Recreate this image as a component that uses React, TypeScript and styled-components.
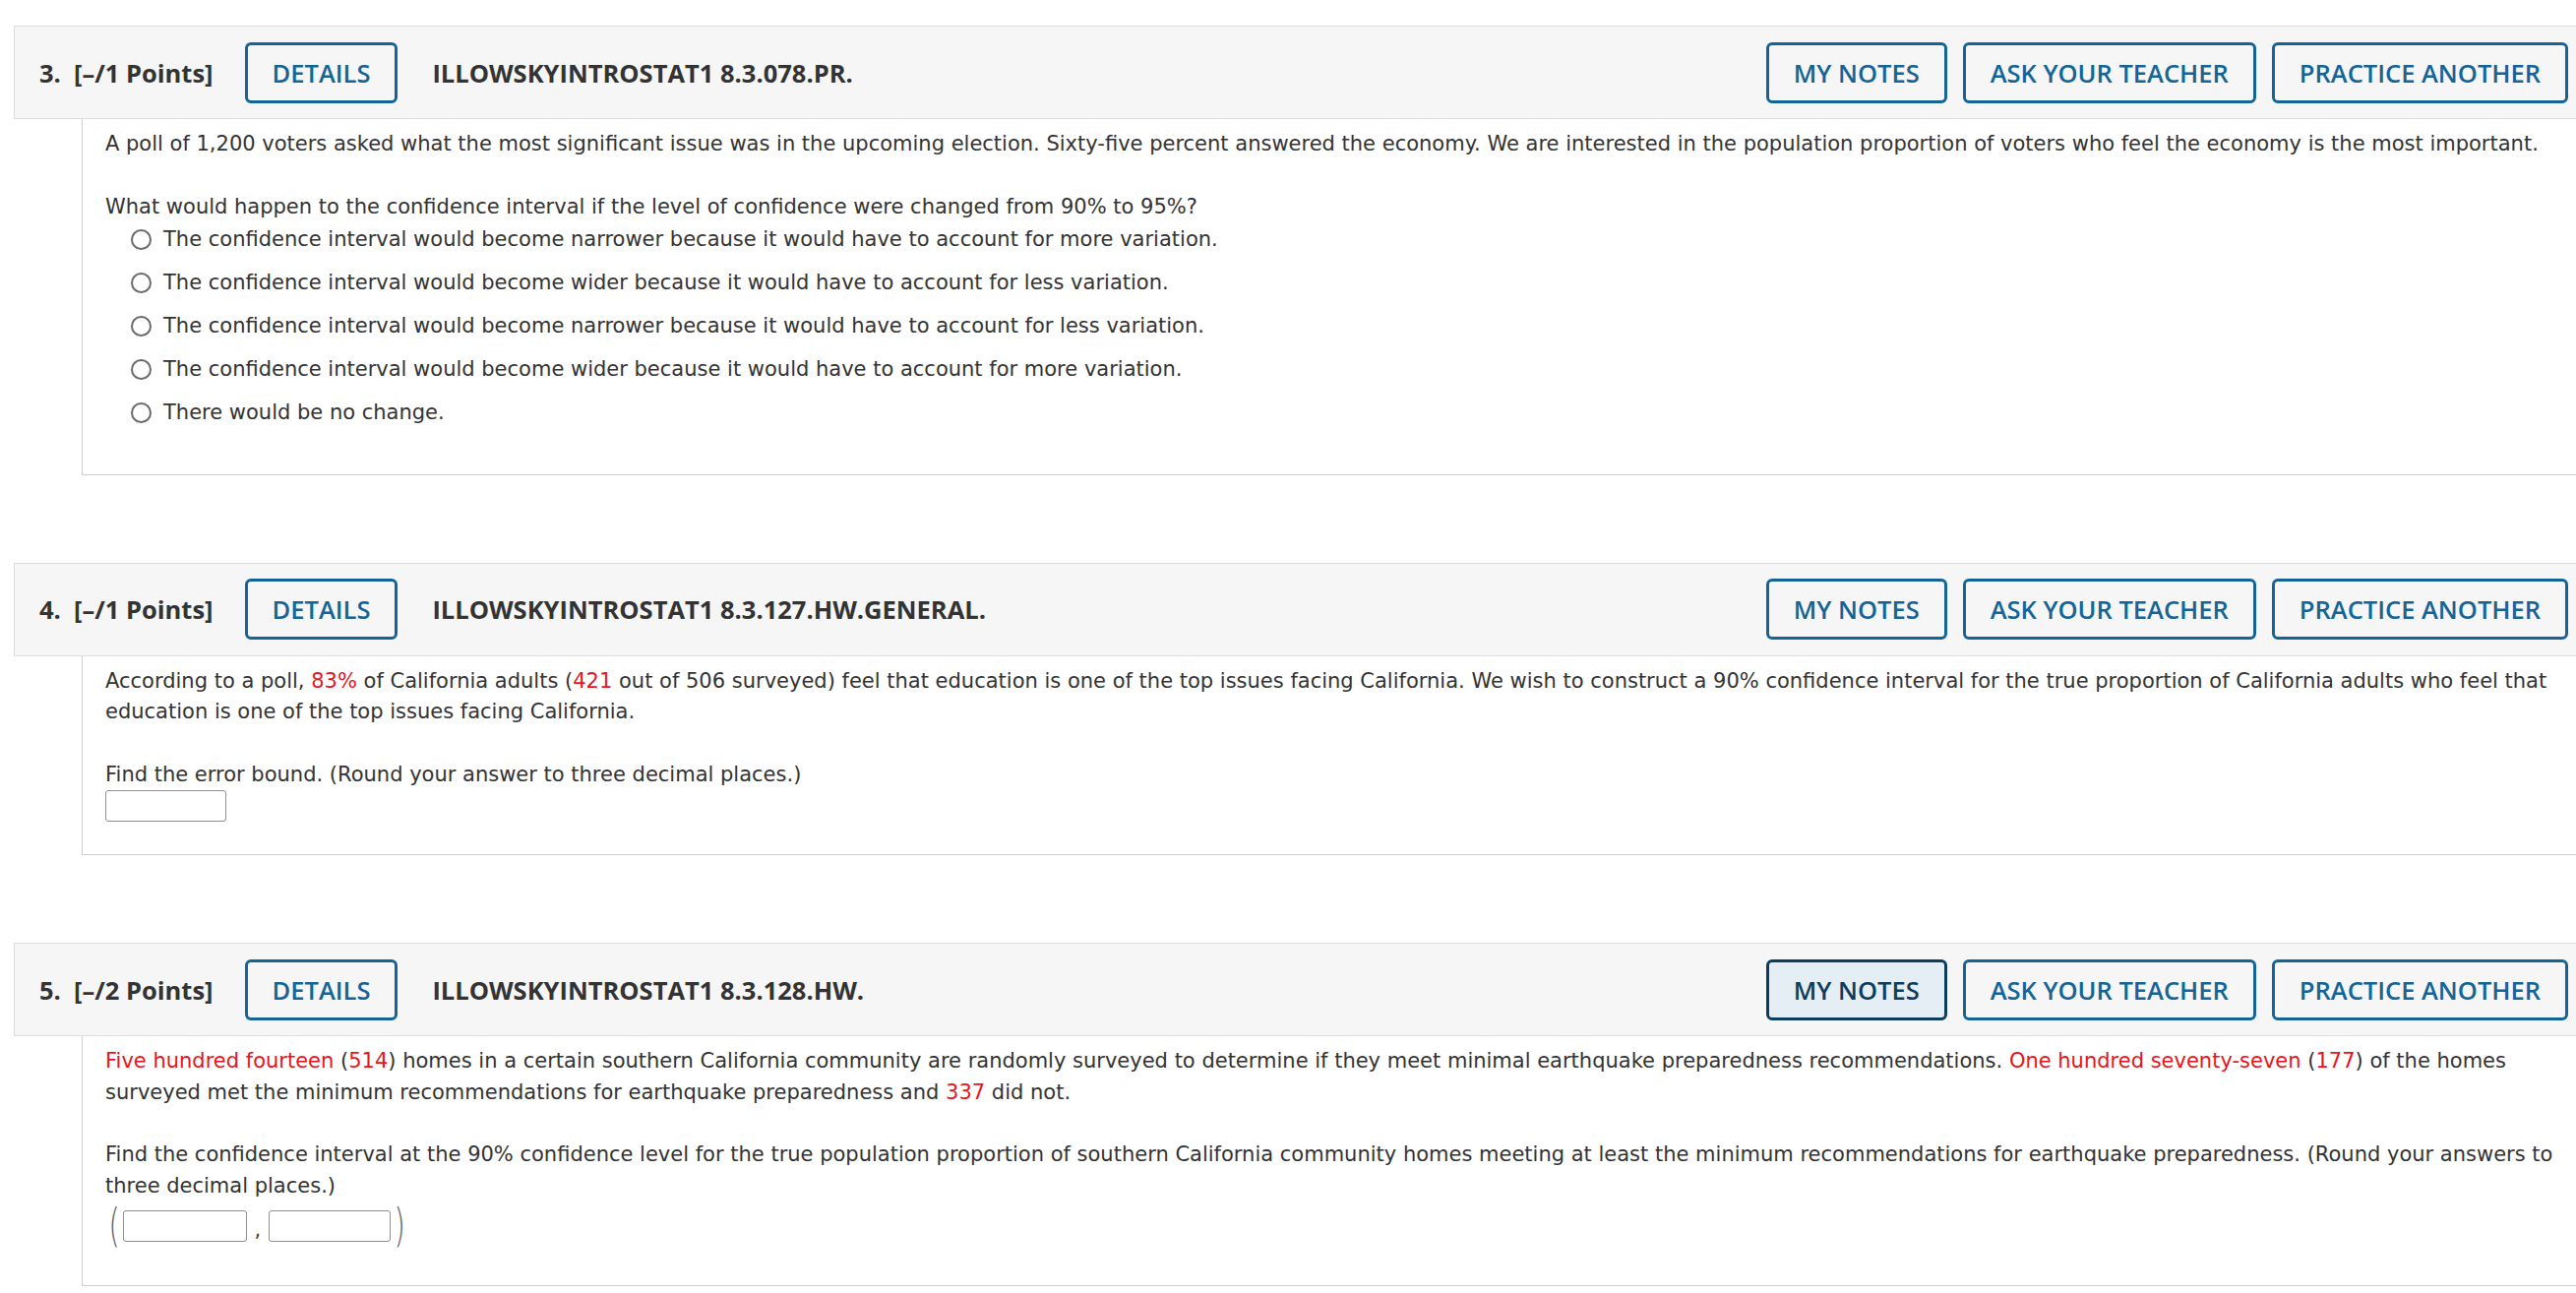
import React from "react";
import styled, { createGlobalStyle, css } from "styled-components";

const GlobalStyle = createGlobalStyle`
  html, body { margin: 0; padding: 0; background: #ffffff; }
  body { overflow-x: hidden; }
`;

const Page = styled.div`
  padding: 26px 0 0 14px;
  width: 2618px;
  box-sizing: border-box;
  overflow: hidden;
`;

const Question = styled.section`
  width: 2614px;
  margin-bottom: 89px;
  &:last-of-type { margin-bottom: 0; }
`;

const Header = styled.header`
  display: flex;
  align-items: center;
  box-sizing: border-box;
  height: 95px;
  padding: 0 18px 0 25px;
  background: #f6f6f6;
  border-top: 1px solid #dcdcdc;
  border-bottom: 1px solid #dcdcdc;
  border-left: 1px solid #dcdcdc;
  font-family: "Open Sans", "Liberation Sans", sans-serif;
  font-weight: 700;
  font-size: 25.5px;
  color: #333333;
`;

const Points = styled.span`
  white-space: pre;
  margin-right: 32px;
`;

const Title = styled.span`
  margin-left: 35px;
  flex: 1;
`;

const Actions = styled.div`
  display: flex;
  gap: 16px;
`;

const Btn = styled.button<{ $active?: boolean }>`
  box-sizing: border-box;
  height: 62px;
  padding: 0 25px;
  border: 3px solid #146497;
  border-radius: 6px;
  background: transparent;
  color: #146497;
  font-family: "Open Sans", "Liberation Sans", sans-serif;
  font-weight: 600;
  font-size: 25.5px;
  white-space: nowrap;
  cursor: pointer;
  ${(p) =>
    p.$active &&
    css`
      background: #e6eef5;
      border-color: #0c3d5e;
      color: #0c3d5e;
    `}
`;

const Body = styled.div<{ $pb: number }>`
  margin-left: 69px;
  padding: 10px 33px ${(p) => p.$pb}px 23px;
  border-left: 1px solid #cfcfcf;
  border-bottom: 1px solid #cfcfcf;
  font-family: "DejaVu Sans", Verdana, sans-serif;
  font-size: 21px;
  line-height: 31.5px;
  color: #333333;
`;

const Para = styled.p`
  margin: 0 0 32px 0;
`;

const Prompt = styled.div``;

const Red = styled.span`
  color: #e8141b;
`;

const Options = styled.ul`
  list-style: none;
  margin: 2px 0 0 0;
  padding: 0 0 0 26px;
  display: flex;
  flex-direction: column;
  gap: 12.5px;
`;

const Option = styled.li`
  display: flex;
  align-items: center;
  gap: 12px;
`;

const Radio = styled.span`
  box-sizing: border-box;
  width: 21px;
  height: 21px;
  border-radius: 50%;
  border: 2px solid #6a6a6a;
  background: #fff;
  flex: none;
`;

const AnswerBox = styled.span<{ $w: number }>`
  display: inline-block;
  box-sizing: border-box;
  width: ${(p) => p.$w}px;
  height: 32px;
  border: 1px solid #8f8f8f;
  border-radius: 3px;
  background: #fff;
  vertical-align: middle;
`;

const AnswerRow = styled.div`
  display: flex;
  align-items: center;
  height: 32px;
`;

const IntervalRow = styled.div`
  display: flex;
  align-items: center;
  height: 45px;
  margin-top: 2px;
`;

const Paren = styled.span`
  font-family: "DejaVu Sans", sans-serif;
  font-weight: 200;
  font-size: 46px;
  line-height: 45px;
  color: #666;
  transform: scaleX(0.65);
`;

const Comma = styled.span`
  width: 22px;
  text-align: center;
  font-size: 21px;
  line-height: 32px;
  padding-top: 8px;
  color: #444;
`;

const App: React.FC = () => {
  return (
    <Page>
      <GlobalStyle />

      <Question>
        <Header>
          <Points>{"3.  [–/1 Points]"}</Points>
          <Btn>DETAILS</Btn>
          <Title>ILLOWSKYINTROSTAT1 8.3.078.PR.</Title>
          <Actions>
            <Btn>MY NOTES</Btn>
            <Btn>ASK YOUR TEACHER</Btn>
            <Btn>PRACTICE ANOTHER</Btn>
          </Actions>
        </Header>
        <Body $pb={46}>
          <Para>
            A poll of 1,200 voters asked what the most significant issue was in the upcoming election. Sixty-five
            percent answered the economy. We are interested in the population proportion of voters who feel the
            economy is the most important.
          </Para>
          <Prompt>What would happen to the confidence interval if the level of confidence were changed from 90% to 95%?</Prompt>
          <Options>
            <Option><Radio />The confidence interval would become narrower because it would have to account for more variation.</Option>
            <Option><Radio />The confidence interval would become wider because it would have to account for less variation.</Option>
            <Option><Radio />The confidence interval would become narrower because it would have to account for less variation.</Option>
            <Option><Radio />The confidence interval would become wider because it would have to account for more variation.</Option>
            <Option><Radio />There would be no change.</Option>
          </Options>
        </Body>
      </Question>

      <Question>
        <Header>
          <Points>{"4.  [–/1 Points]"}</Points>
          <Btn>DETAILS</Btn>
          <Title>ILLOWSKYINTROSTAT1 8.3.127.HW.GENERAL.</Title>
          <Actions>
            <Btn>MY NOTES</Btn>
            <Btn>ASK YOUR TEACHER</Btn>
            <Btn>PRACTICE ANOTHER</Btn>
          </Actions>
        </Header>
        <Body $pb={33}>
          <Para>
            According to a poll, <Red>83%</Red> of California adults (<Red>421</Red> out of 506 surveyed) feel that
            education is one of the top issues facing California. We wish to construct a 90% confidence interval for
            the true proportion of California adults who feel that education is one of the top issues facing California.
          </Para>
          <Prompt>Find the error bound. (Round your answer to three decimal places.)</Prompt>
          <AnswerRow>
            <AnswerBox $w={123} />
          </AnswerRow>
        </Body>
      </Question>

      <Question>
        <Header>
          <Points>{"5.  [–/2 Points]"}</Points>
          <Btn>DETAILS</Btn>
          <Title>ILLOWSKYINTROSTAT1 8.3.128.HW.</Title>
          <Actions>
            <Btn $active>MY NOTES</Btn>
            <Btn>ASK YOUR TEACHER</Btn>
            <Btn>PRACTICE ANOTHER</Btn>
          </Actions>
        </Header>
        <Body $pb={38}>
          <Para>
            <Red>Five hundred fourteen</Red> (<Red>514</Red>) homes in a certain southern California community are
            randomly surveyed to determine if they meet minimal earthquake preparedness recommendations.{" "}
            <Red>One hundred seventy-seven</Red> (<Red>177</Red>) of the homes surveyed met the minimum
            recommendations for earthquake preparedness and <Red>337</Red> did not.
          </Para>
          <Prompt>
            Find the confidence interval at the 90% confidence level for the true population proportion of southern
            California community homes meeting at least the minimum recommendations for earthquake preparedness.
            (Round your answers to three decimal places.)
          </Prompt>
          <IntervalRow>
            <Paren>(</Paren>
            <AnswerBox $w={126} />
            <Comma>,</Comma>
            <AnswerBox $w={124} />
            <Paren>)</Paren>
          </IntervalRow>
        </Body>
      </Question>
    </Page>
  );
};

export default App;
